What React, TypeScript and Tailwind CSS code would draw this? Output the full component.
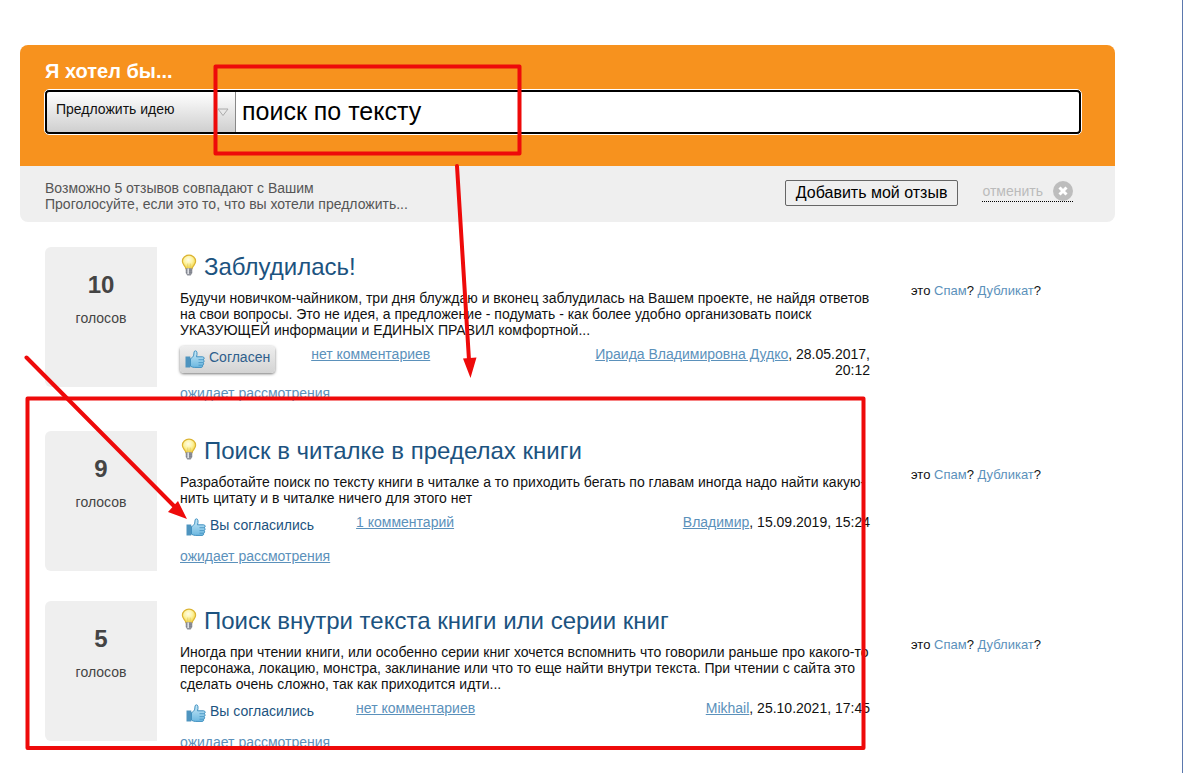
import React from 'react';

interface IdeaProps {
    id: number;
    votes: number;
    title: string;
    text: string;
    agreed: boolean;
    comments: string;
    author: string;
    date: string;
}

const ideas: IdeaProps[] = [
    {
        id: 1,
        votes: 10,
        title: 'Заблудилась!',
        text: 'Будучи новичком-чайником, три дня блуждаю и вконец заблудилась на Вашем проекте, не найдя ответов на свои вопросы. Это не идея, а предложение - подумать - как более удобно организовать поиск УКАЗУЮЩЕЙ информации и ЕДИНЫХ ПРАВИЛ комфортной...',
        agreed: false,
        comments: 'нет комментариев',
        author: 'Ираида Владимировна Дудко',
        date: '28.05.2017, 20:12',
    },
    {
        id: 2,
        votes: 9,
        title: 'Поиск в читалке в пределах книги',
        text: 'Разработайте поиск по тексту книги в читалке а то приходить бегать по главам иногда надо найти какую-нить цитату и в читалке ничего для этого нет',
        agreed: true,
        comments: '1 комментарий',
        author: 'Владимир',
        date: '15.09.2019, 15:24',
    },
    {
        id: 3,
        votes: 5,
        title: 'Поиск внутри текста книги или серии книг',
        text: 'Иногда при чтении книги, или особенно серии книг хочется вспомнить что говорили раньше про какого-то персонажа, локацию, монстра, заклинание или что то еще найти внутри текста. При чтении с сайта это сделать очень сложно, так как приходится идти...',
        agreed: true,
        comments: 'нет комментариев',
        author: 'Mikhail',
        date: '25.10.2021, 17:45',
    },
];

const BulbIcon = () => (
    <svg width="18" height="24" viewBox="0 -1 18 24" className="shrink-0" aria-hidden="true">
        <defs>
            <radialGradient id="bulb" cx="0.45" cy="0.35" r="0.65">
                <stop offset="0" stopColor="#fffde8" />
                <stop offset="0.5" stopColor="#fdf3a0" />
                <stop offset="1" stopColor="#f2d23c" />
            </radialGradient>
        </defs>
        <path
            d="M9 1.200c-3.800 0-6.600 2.700-6.600 6 0 2.600 1.800 3.900 2.700 5.600.4.700.6 1.300.7 1.900h6.400c.1-.6.300-1.200.7-1.900.9-1.700 2.700-3 2.700-5.600 0-3.300-2.800-6-6.600-6z"
            fill="url(#bulb)"
            stroke="#dcb433"
            strokeWidth="1.200"
        />
        <path d="M7.800 14.200V9.500M10.200 14.200V9.500" fill="none" stroke="#e0c460" strokeWidth="0.700" />
        <path d="M5.700 14.200h6.600v4.800l-1.600 2.400H7.300L5.700 19z" fill="#8f929b" />
        <path d="M6 16.200h6M6 18.300h6" stroke="#777b85" strokeWidth="0.700" />
        <path d="M8.200 14.600v5.400" stroke="#dfe1e6" strokeWidth="1.600" />
    </svg>
);

const ThumbIcon = () => (
    <svg width="20" height="19" viewBox="0 0 20 19" className="shrink-0" aria-hidden="true">
        <defs>
            <linearGradient id="thumb" x1="0" y1="0" x2="0" y2="1">
                <stop offset="0" stopColor="#c9e9f8" />
                <stop offset="1" stopColor="#6cb8e0" />
            </linearGradient>
        </defs>
        <path d="M.5 6.500h4.800v11H.5z" fill="#4e94bf" />
        <path
            d="M5.500 8.500c1.500-.5 2.700-1.700 3.200-3.300l.4-3.200c.2-1.600 2.500-1.500 2.800.2.300 1.500.1 3-.4 4.600h6c2 0 2.200 2.400.7 2.900 1.300.5 1.200 2.500-.2 2.900 1 .6.800 2.300-.5 2.600.6.900 0 2.200-1.400 2.200H9.300c-1.500 0-2.500-.4-3.800-1.200z"
            fill="url(#thumb)"
            stroke="#4191c0"
            strokeWidth="1"
            strokeLinejoin="round"
        />
        <path d="M13.500 9.700h4.500M13.500 12.600h4.400M13.500 15.200h3.800" stroke="#4191c0" strokeWidth="0.800" />
    </svg>
);

const IdeaCard = ({ idea }: { idea: IdeaProps }) => {
    return (
        <article className="flex">
            <div className="flex h-[140px] w-28 shrink-0 flex-col items-center rounded-l-md bg-[#efefef] pt-6 text-[#444]">
                <p className="text-2xl leading-7 font-bold">{idea.votes}</p>
                <p className="mt-[11px] leading-4">голосов</p>
            </div>
            <div className="ml-[23px] min-w-0 flex-1 pt-1.5">
                <div className="flex items-start gap-1.5">
                    <BulbIcon />
                    <h2 className="text-2xl leading-7 text-[#1c5380]">
                        <a href="#">{idea.title}</a>
                    </h2>
                </div>
                <p className="mt-[9px] leading-4">{idea.text}</p>
                <div className="mt-2 flex items-start">
                    {idea.agreed ? (
                        <p className="flex h-[27px] items-center gap-1 px-1.5 text-[#1c5380]">
                            <ThumbIcon />
                            <span className="pb-1.5">Вы согласились</span>
                        </p>
                    ) : (
                        <button
                            type="button"
                            className="flex h-[27px] items-center gap-1 rounded-sm bg-linear-to-b from-[#eee] to-[#d3d3d3] px-[5px] text-[#2f5f8c] shadow-[0_1px_3px_#777]"
                        >
                            <ThumbIcon />
                            <span className="pb-1.5">Согласен</span>
                        </button>
                    )}
                    <a href="#" className="ml-9 leading-4 text-[#5b91bb] underline">
                        {idea.comments}
                    </a>
                    <p className="ml-auto max-w-[300px] text-right leading-4">
                        <a href="#" className="text-[#5b91bb] underline">
                            {idea.author}
                        </a>
                        , {idea.date}
                    </p>
                </div>
                <p className="mt-[7px] leading-4">
                    <a href="#" className="text-[#5b91bb] underline">
                        ожидает рассмотрения
                    </a>
                </p>
            </div>
            <p className="ml-[41px] w-[204px] shrink-0 pt-9 text-[13px] leading-4">
                это{' '}
                <a href="#" className="text-[#5b91bb]">
                    Спам
                </a>
                ?{' '}
                <a href="#" className="text-[#5b91bb]">
                    Дубликат
                </a>
                ?
            </p>
        </article>
    );
};

// Red frames and arrows drawn over the page
const Marks = () => (
    <svg className="pointer-events-none absolute top-0 left-0 h-full w-full" aria-hidden="true">
        <g fill="none" stroke="#ee0a0a" strokeWidth="4" strokeLinejoin="round" strokeLinecap="round">
            <rect x="215.500" y="66.500" width="304" height="87" />
            <rect x="27.500" y="398.500" width="836" height="349.500" />
            <path d="M457 166l12 194M26.500 357.500L174 506" />
        </g>
        <path d="M463 358.500l13.500-1-6 20.500zM168 512l10-11 9 18z" fill="#ee0a0a" />
    </svg>
);

const App = () => {
    return (
        <div className="relative min-h-screen overflow-hidden border-r border-[#5b78ad] bg-white pt-[45px] pr-[67px] pl-5 font-['Liberation_Sans',Arial,sans-serif] text-sm text-[#111]">
            <header className="overflow-hidden rounded-lg">
                <div className="bg-[#f7921e] pt-3.5 pr-[33px] pb-[31px] pl-6">
                    <label htmlFor="query" className="block pl-px text-xl leading-6 font-bold text-white">
                        Я хотел бы...
                    </label>
                    <div className="mt-1.5 flex h-[46px] overflow-hidden rounded-[5px] border border-white bg-black p-0.5">
                        <button
                            type="button"
                            className="flex w-[189px] shrink-0 items-center justify-between rounded-l-xs border-r border-[#888] bg-linear-to-b from-white to-[#cfcfcf] pr-1.5 pl-[9px] text-[#111]"
                        >
                            <span className="pb-1.5">Предложить идею</span>
                            <svg width="12" height="9" viewBox="0 0 12 9" aria-hidden="true">
                                <path d="M1 1h10L6 7.500z" fill="#e8e8e8" stroke="#aaa" />
                            </svg>
                        </button>
                        <input
                            id="query"
                            type="text"
                            defaultValue="поиск по тексту"
                            className="min-w-0 flex-1 rounded-r-xs bg-white px-1.5 text-[25px] text-black outline-none"
                        />
                    </div>
                </div>
                <div className="flex h-14 items-start justify-between bg-[#efefef] pt-3.5 pr-[42px] pl-[25px] text-[#555]">
                    <p className="leading-4">
                        Возможно 5 отзывов совпадают с Вашим
                        <br />
                        Проголосуйте, если это то, что вы хотели предложить...
                    </p>
                    <div className="flex items-start gap-6">
                        <button
                            type="button"
                            className="h-[26px] rounded-xs border border-[#666] px-2.5 text-base leading-6 text-black"
                        >
                            Добавить мой отзыв
                        </button>
                        <button
                            type="button"
                            className="flex h-[22px] items-center gap-2.5 border-b border-dotted border-black text-[#bbb]"
                        >
                            отменить
                            <svg width="20" height="20" viewBox="0 0 20 20" aria-hidden="true">
                                <circle cx="10" cy="10" r="10" fill="#bdbdbd" />
                                <path d="M6.500 6.500l7 7M13.500 6.500l-7 7" stroke="#fff" strokeWidth="3" />
                            </svg>
                        </button>
                    </div>
                </div>
            </header>
            <main className="mt-[25px] flex flex-col gap-[30px] pl-[25px]">
                {ideas.map((idea) => (
                    <IdeaCard key={idea.id} idea={idea} />
                ))}
            </main>
            <Marks />
        </div>
    );
};

export default App;
